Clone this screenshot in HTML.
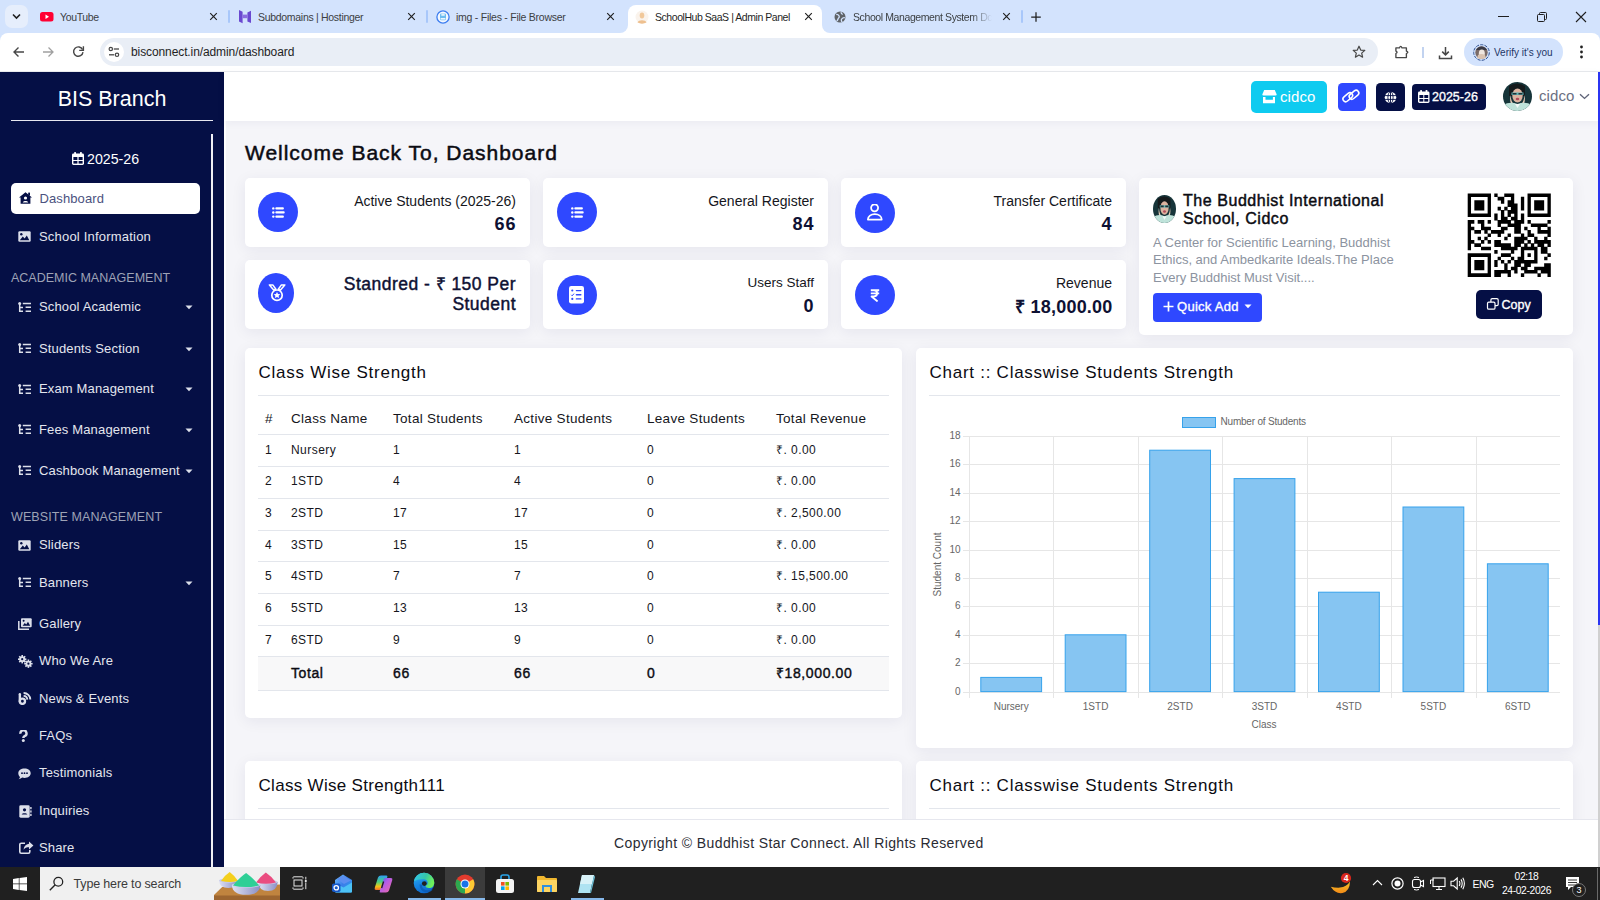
<!DOCTYPE html>
<html><head><meta charset="utf-8">
<style>
*{box-sizing:border-box;margin:0;padding:0}
html,body{width:1600px;height:900px;overflow:hidden;font-family:"Liberation Sans",sans-serif;background:#d3e3fd}
.abs{position:absolute}
#tabbar{position:absolute;left:0;top:0;width:1600px;height:33px;background:#d3e3fd}
.tabt{position:absolute;top:10px;font-size:12px;color:#3c4043;white-space:nowrap;line-height:14px}
.sep{position:absolute;top:10px;width:2px;height:13px;background:#a8c7fa;border-radius:1px}
#toolbar{position:absolute;left:0;top:33px;width:1600px;height:39px;background:#fff;border-radius:8px 8px 0 0;border-bottom:1px solid #e8eaed}
#omni{position:absolute;left:100px;top:5px;width:1278px;height:28px;background:#e9eef6;border-radius:14px}
#side{position:absolute;left:0;top:72px;width:224px;height:795px;background:#050f45;color:#e4e6ee}
#page{position:absolute;left:224px;top:72px;width:1376px;height:795px;background:#f5f5f9;overflow:hidden}
#hdr{position:absolute;left:0;top:0;width:1376px;height:49px;background:#fff}
.card{position:absolute;background:#fff;border-radius:5px;box-shadow:0 3px 15px rgba(30,30,90,0.07)}
#taskbar{position:absolute;left:0;top:867px;width:1600px;height:33px;background:#202020}
</style></head><body>
<div id="tabbar">
  <div class="abs" style="left:5px;top:5px;width:23px;height:23px;border-radius:7px;background:#e6eefc"></div>
  <svg class="abs" style="left:11px;top:12px" width="11" height="9" viewBox="0 0 11 9"><path d="M2 2.5 L5.5 6 L9 2.5" fill="none" stroke="#1f1f1f" stroke-width="1.6"/></svg>
  <!-- tab1 youtube -->
  <svg class="abs" style="left:40px;top:12px" width="14" height="10" viewBox="0 0 14 10"><rect x="0" y="0" width="13.5" height="9.5" rx="2.5" fill="#ff0033"/><path d="M5.5 2.6 L9 4.75 L5.5 6.9Z" fill="#fff"/></svg>
  <div class="tabt" style="left:60px;font-size:10.5px;letter-spacing:-0.35px">YouTube</div>
  <svg class="abs x" style="left:209px;top:12px" width="9" height="9" viewBox="0 0 9 9"><path d="M1.2 1.2L7.8 7.8M7.8 1.2L1.2 7.8" stroke="#1f1f1f" stroke-width="1.15"/></svg>
  <div class="sep" style="left:228px"></div>
  <!-- tab2 hostinger -->
  <svg class="abs" style="left:239px;top:10px" width="13" height="14" viewBox="0 0 13 14"><path d="M0 0L3.6 1.8V13.2L0 11.4Z" fill="#6a48d0"/><path d="M12 0.8V13L8.4 11.4V2.4Z" fill="#6a48d0"/><path d="M3.6 4.6L8.4 4.6V8.2H3.6Z" fill="#8a6be0"/></svg>
  <div class="tabt" style="left:258px;font-size:10.5px;letter-spacing:-0.3px">Subdomains | Hostinger</div>
  <svg class="abs x" style="left:407px;top:12px" width="9" height="9" viewBox="0 0 9 9"><path d="M1.2 1.2L7.8 7.8M7.8 1.2L1.2 7.8" stroke="#1f1f1f" stroke-width="1.15"/></svg>
  <div class="sep" style="left:426px"></div>
  <!-- tab3 img files -->
  <svg class="abs" style="left:436px;top:10px" width="14" height="14" viewBox="0 0 14 14"><circle cx="7" cy="7" r="6.1" fill="#f4f8ff" stroke="#3d7ef0" stroke-width="1.3"/><rect x="4" y="3.6" width="6" height="6.6" rx="1.2" fill="#6cbcf0"/><rect x="5.3" y="3.6" width="3.4" height="2.2" fill="#dff1fc"/><rect x="4.6" y="8" width="4.8" height="1.6" fill="#eaf6ff"/></svg>
  <div class="tabt" style="left:456px;font-size:10.5px;letter-spacing:-0.25px">img - Files - File Browser</div>
  <svg class="abs x" style="left:606px;top:12px" width="9" height="9" viewBox="0 0 9 9"><path d="M1.2 1.2L7.8 7.8M7.8 1.2L1.2 7.8" stroke="#1f1f1f" stroke-width="1.15"/></svg>
  <!-- active tab -->
  <div class="abs" style="left:628px;top:5px;width:194px;height:28px;background:#fff;border-radius:8px 8px 0 0"></div>
  <div class="abs" style="left:620px;top:25px;width:8px;height:8px;background:#fff"></div>
  <div class="abs" style="left:620px;top:25px;width:8px;height:8px;background:#d3e3fd;border-radius:0 0 8px 0"></div>
  <div class="abs" style="left:822px;top:25px;width:8px;height:8px;background:#fff"></div>
  <div class="abs" style="left:822px;top:25px;width:8px;height:8px;background:#d3e3fd;border-radius:0 0 0 8px"></div>
  <svg class="abs" style="left:635px;top:10px" width="14" height="14" viewBox="0 0 14 14"><circle cx="7" cy="7" r="6.5" fill="#faf3ec"/><ellipse cx="7" cy="5.6" rx="2.3" ry="3" fill="#f1c89a"/><path d="M2.5 12.6 C3.5 9.6 10.5 9.6 11.5 12.6 C9 14 5 14 2.5 12.6Z" fill="#eec08f"/></svg>
  <div class="tabt" style="left:655px;color:#1f1f1f;font-size:10.5px;letter-spacing:-0.45px">SchoolHub SaaS | Admin Panel</div>
  <svg class="abs x" style="left:804px;top:12px" width="9" height="9" viewBox="0 0 9 9"><path d="M1.2 1.2L7.8 7.8M7.8 1.2L1.2 7.8" stroke="#1f1f1f" stroke-width="1.15"/></svg>
  <!-- tab5 -->
  <svg class="abs" style="left:834px;top:11px" width="12" height="12" viewBox="0 0 12 12"><circle cx="6" cy="6" r="5.5" fill="#5f6368"/><path d="M2.2 3.5 C3.5 3.2 4.6 4.2 5.2 5.2 C5.8 6.3 4.4 6.8 4 8 C3.8 9 3.2 9.8 2.6 9.4 M7.2 1.2 C7 2.4 7.8 3.2 8.8 3.3 M10.8 6.8 C9.6 6.4 8.4 7.2 7.6 8.2 C7 9.2 7.4 10.4 8.4 10.8" fill="none" stroke="#d3e3fd" stroke-width="1.3"/></svg>
  <div class="tabt" style="left:853px;font-size:10.5px;letter-spacing:-0.4px;width:139px;overflow:hidden;-webkit-mask-image:linear-gradient(90deg,#000 85%,transparent)">School Management System Dc</div>
  <svg class="abs x" style="left:1002px;top:12px" width="9" height="9" viewBox="0 0 9 9"><path d="M1.2 1.2L7.8 7.8M7.8 1.2L1.2 7.8" stroke="#1f1f1f" stroke-width="1.15"/></svg>
  <div class="sep" style="left:1021px"></div>
  <svg class="abs" style="left:1030px;top:11px" width="12" height="12" viewBox="0 0 12 12"><path d="M6 1.2V10.8M1.2 6H10.8" stroke="#1f1f1f" stroke-width="1.25"/></svg>
  <!-- window controls -->
  <div class="abs" style="left:1498px;top:16px;width:11px;height:1px;background:#1f1f1f"></div>
  <svg class="abs" style="left:1536px;top:11px" width="12" height="12" viewBox="0 0 12 12"><rect x="1.5" y="3.5" width="7" height="7" rx="1" fill="none" stroke="#1f1f1f" stroke-width="1"/><path d="M3.5 3.5V2.5A1 1 0 0 1 4.5 1.5H9.5A1 1 0 0 1 10.5 2.5V7.5A1 1 0 0 1 9.5 8.5H8.5" fill="none" stroke="#1f1f1f" stroke-width="1"/></svg>
  <svg class="abs" style="left:1575px;top:11px" width="12" height="12" viewBox="0 0 12 12"><path d="M1 1L11 11M11 1L1 11" stroke="#1f1f1f" stroke-width="1.1"/></svg>
</div>
<div id="toolbar">
  <svg class="abs" style="left:12px;top:13px" width="13" height="12" viewBox="0 0 13 12"><path d="M12 6H2M6.5 1.5L2 6L6.5 10.5" fill="none" stroke="#474747" stroke-width="1.4"/></svg>
  <svg class="abs" style="left:42px;top:13px" width="13" height="12" viewBox="0 0 13 12"><path d="M1 6H11M6.5 1.5L11 6L6.5 10.5" fill="none" stroke="#a0a0a0" stroke-width="1.3"/></svg>
  <svg class="abs" style="left:72px;top:12px" width="13" height="13" viewBox="0 0 13 13"><path d="M10.6 4.6A4.7 4.7 0 1 0 11 7.2" fill="none" stroke="#474747" stroke-width="1.4"/><path d="M11.4 1.2V5.4H7.2" fill="none" stroke="#474747" stroke-width="1.4"/></svg>
  <div id="omni">
    <div class="abs" style="left:4px;top:4px;width:20px;height:20px;border-radius:10px;background:#fff"></div>
    <svg class="abs" style="left:8px;top:8px" width="12" height="12" viewBox="0 0 12 12"><circle cx="2.8" cy="3" r="1.7" fill="none" stroke="#474747" stroke-width="1.2"/><path d="M5.8 3H11" stroke="#474747" stroke-width="1.3"/><circle cx="9" cy="8.8" r="1.7" fill="none" stroke="#474747" stroke-width="1.2"/><path d="M1 8.8H6.2" stroke="#474747" stroke-width="1.3"/></svg>
    <div class="abs" style="left:31px;top:7px;font-size:12px;line-height:14px;color:#1f1f1f;letter-spacing:-0.1px">bisconnect.in/admin/dashboard</div>
  </div>
  <svg class="abs" style="left:1352px;top:12px" width="14" height="14" viewBox="0 0 14 14"><path d="M7 1.2L8.7 5.1L12.8 5.4L9.7 8.1L10.6 12.2L7 10L3.4 12.2L4.3 8.1L1.2 5.4L5.3 5.1Z" fill="none" stroke="#474747" stroke-width="1.2" stroke-linejoin="round"/></svg>
  <svg class="abs" style="left:1394px;top:12px" width="15" height="14" viewBox="0 0 15 14"><path d="M1.9 2.9H5.4Q6.7 -0.3 8 2.9H12.4V6.1Q15.2 7.3 12.4 8.5V12.6H1.9V8.5Q4.2 7.3 1.9 6.1Z" fill="none" stroke="#474747" stroke-width="1.35" stroke-linejoin="round"/></svg>
  <div class="abs" style="left:1422px;top:14px;width:1.5px;height:11px;background:#c2d3f0"></div>
  <svg class="abs" style="left:1438px;top:12.5px" width="15" height="14" viewBox="0 0 15 14"><path d="M7.5 1V8.6M4.2 5.6L7.5 8.9L10.8 5.6M1.5 9.5V12.5H13.5V9.5" fill="none" stroke="#474747" stroke-width="1.5"/></svg>
  <div class="abs" style="left:1464px;top:5px;width:99px;height:28px;border-radius:14px;background:#d3e3fd"></div>
  <svg class="abs" style="left:1472.5px;top:11px" width="17" height="17" viewBox="0 0 17 17"><circle cx="8.5" cy="8.5" r="7.8" fill="none" stroke="#2d4f8f" stroke-width="1" stroke-dasharray="3.2 1.2"/><circle cx="8.5" cy="8.5" r="6.2" fill="#7a6a66"/><path d="M3 6Q5 2.5 8.5 2.5Q12 2.5 14 6Z" fill="#3a3a44"/><ellipse cx="8.8" cy="9.5" rx="3" ry="4" fill="#efe6df"/><path d="M5 11Q8 9 12 11L13 14Q8.5 16 4 14Z" fill="#d9c2b0"/></svg>
  <div class="abs" style="left:1494px;top:13px;font-size:10px;line-height:14px;color:#1d3566">Verify it's you</div>
  <svg class="abs" style="left:1579px;top:12px" width="5" height="14" viewBox="0 0 5 14"><circle cx="2.5" cy="2" r="1.4" fill="#1f1f1f"/><circle cx="2.5" cy="7" r="1.4" fill="#1f1f1f"/><circle cx="2.5" cy="12" r="1.4" fill="#1f1f1f"/></svg>
</div>

<div id="side">
<div class="abs" style="left:0;top:14.5px;width:224px;text-align:center;font-size:21.5px;line-height:24px;color:#fff">BIS Branch</div>
<div class="abs" style="left:11px;top:48px;width:202px;height:1px;background:#e8e8f0"></div>
<div class="abs" style="left:211.4px;top:62px;width:1.7px;height:733px;background:#f0f0f6"></div>
<svg class="abs" style="left:72px;top:80px" width="12" height="13" viewBox="0 0 12 13"><rect x="0" y="1.6" width="12" height="11.4" rx="1.4" fill="#fff"/><rect x="2.2" y="0" width="1.8" height="3" rx="0.6" fill="#fff"/><rect x="8" y="0" width="1.8" height="3" rx="0.6" fill="#fff"/><rect x="1.4" y="5" width="4" height="3" fill="#050f45"/><rect x="6.6" y="5" width="4" height="3" fill="#050f45"/><rect x="1.4" y="9" width="4" height="2.6" fill="#050f45"/><rect x="6.6" y="9" width="4" height="2.6" fill="#050f45"/></svg>
<div class="abs" style="left:87px;top:78.5px;font-size:14.2px;line-height:17px;color:#fff;letter-spacing:0px">2025-26</div>
<div class="abs" style="left:11px;top:111px;width:189px;height:31px;background:#fff;border-radius:5px"></div>
<svg class="abs" style="left:19px;top:120px" width="13" height="12" viewBox="0 0 13 12"><path d="M6.5 0.2L13 5.6H11.4V11.8H1.6V5.6H0Z" fill="#050f45"/><rect x="9.2" y="0.6" width="1.8" height="3" fill="#050f45"/><circle cx="6.5" cy="6" r="1.6" fill="#fff"/><path d="M3.8 10.4C4 8.4 9 8.4 9.2 10.4Z" fill="#fff"/></svg>
<div class="abs" style="left:39.5px;top:119px;font-size:13px;line-height:15px;color:#4b5280;letter-spacing:0.1px">Dashboard</div>
<svg class="abs" style="left:18px;top:158.5px" width="13" height="11" viewBox="0 0 13 11"><rect x="0.3" y="0.3" width="12.4" height="10.4" rx="1.2" fill="#dcdfea"/><circle cx="3.3" cy="3.2" r="1.2" fill="#050f45"/><path d="M1.8 9.3L4.8 5.6L6.6 7.4L8.8 4.4L11.3 9.3Z" fill="#050f45"/></svg>
<div class="abs" style="left:39px;top:156.5px;font-size:13px;line-height:15px;color:#e4e6ee;letter-spacing:0.2px">School Information</div>
<div class="abs" style="left:11px;top:199px;font-size:12.5px;line-height:14px;color:#9ea3b6;letter-spacing:0px">ACADEMIC MANAGEMENT</div>
<div class="abs" style="left:11px;top:437.5px;font-size:12.5px;line-height:14px;color:#9ea3b6;letter-spacing:0.1px">WEBSITE MANAGEMENT</div>
<svg class="abs" style="left:18px;top:229.9px" width="14" height="11" viewBox="0 0 14 11"><circle cx="1.7" cy="1.6" r="1.5" fill="#dcdfea"/><path d="M1.7 2V9.3H5M1.7 5.4H5" fill="none" stroke="#dcdfea" stroke-width="1.5"/><path d="M4.8 1.5H13M7.6 5.3H13M7.6 9.2H13" stroke="#dcdfea" stroke-width="1.6"/></svg>
<div class="abs" style="left:39px;top:227.4px;font-size:13px;line-height:15px;color:#e4e6ee;letter-spacing:0.15px">School Academic</div>
<svg class="abs" style="left:185px;top:232.9px;margin-top:0.5px" width="8" height="5" viewBox="0 0 8 5"><path d="M0.5 0.6H7.5L4 4.2Z" fill="#dcdfea"/></svg>
<svg class="abs" style="left:18px;top:271.0px" width="14" height="11" viewBox="0 0 14 11"><circle cx="1.7" cy="1.6" r="1.5" fill="#dcdfea"/><path d="M1.7 2V9.3H5M1.7 5.4H5" fill="none" stroke="#dcdfea" stroke-width="1.5"/><path d="M4.8 1.5H13M7.6 5.3H13M7.6 9.2H13" stroke="#dcdfea" stroke-width="1.6"/></svg>
<div class="abs" style="left:39px;top:268.5px;font-size:13px;line-height:15px;color:#e4e6ee;letter-spacing:0.15px">Students Section</div>
<svg class="abs" style="left:185px;top:274.0px;margin-top:0.5px" width="8" height="5" viewBox="0 0 8 5"><path d="M0.5 0.6H7.5L4 4.2Z" fill="#dcdfea"/></svg>
<svg class="abs" style="left:18px;top:311.8px" width="14" height="11" viewBox="0 0 14 11"><circle cx="1.7" cy="1.6" r="1.5" fill="#dcdfea"/><path d="M1.7 2V9.3H5M1.7 5.4H5" fill="none" stroke="#dcdfea" stroke-width="1.5"/><path d="M4.8 1.5H13M7.6 5.3H13M7.6 9.2H13" stroke="#dcdfea" stroke-width="1.6"/></svg>
<div class="abs" style="left:39px;top:309.3px;font-size:13px;line-height:15px;color:#e4e6ee;letter-spacing:0.15px">Exam Management</div>
<svg class="abs" style="left:185px;top:314.8px;margin-top:0.5px" width="8" height="5" viewBox="0 0 8 5"><path d="M0.5 0.6H7.5L4 4.2Z" fill="#dcdfea"/></svg>
<svg class="abs" style="left:18px;top:352.4px" width="14" height="11" viewBox="0 0 14 11"><circle cx="1.7" cy="1.6" r="1.5" fill="#dcdfea"/><path d="M1.7 2V9.3H5M1.7 5.4H5" fill="none" stroke="#dcdfea" stroke-width="1.5"/><path d="M4.8 1.5H13M7.6 5.3H13M7.6 9.2H13" stroke="#dcdfea" stroke-width="1.6"/></svg>
<div class="abs" style="left:39px;top:349.9px;font-size:13px;line-height:15px;color:#e4e6ee;letter-spacing:0.15px">Fees Management</div>
<svg class="abs" style="left:185px;top:355.4px;margin-top:0.5px" width="8" height="5" viewBox="0 0 8 5"><path d="M0.5 0.6H7.5L4 4.2Z" fill="#dcdfea"/></svg>
<svg class="abs" style="left:18px;top:393.2px" width="14" height="11" viewBox="0 0 14 11"><circle cx="1.7" cy="1.6" r="1.5" fill="#dcdfea"/><path d="M1.7 2V9.3H5M1.7 5.4H5" fill="none" stroke="#dcdfea" stroke-width="1.5"/><path d="M4.8 1.5H13M7.6 5.3H13M7.6 9.2H13" stroke="#dcdfea" stroke-width="1.6"/></svg>
<div class="abs" style="left:39px;top:390.7px;font-size:13px;line-height:15px;color:#e4e6ee;letter-spacing:0.15px">Cashbook Management</div>
<svg class="abs" style="left:185px;top:396.2px;margin-top:0.5px" width="8" height="5" viewBox="0 0 8 5"><path d="M0.5 0.6H7.5L4 4.2Z" fill="#dcdfea"/></svg>
<svg class="abs" style="left:18px;top:467.7px" width="13" height="11" viewBox="0 0 13 11"><rect x="0.3" y="0.3" width="12.4" height="10.4" rx="1.2" fill="#dcdfea"/><circle cx="3.3" cy="3.2" r="1.2" fill="#050f45"/><path d="M1.8 9.3L4.8 5.6L6.6 7.4L8.8 4.4L11.3 9.3Z" fill="#050f45"/></svg>
<div class="abs" style="left:39px;top:465.2px;font-size:13px;line-height:15px;color:#e4e6ee;letter-spacing:0.15px">Sliders</div>
<svg class="abs" style="left:18px;top:505.1px" width="14" height="11" viewBox="0 0 14 11"><circle cx="1.7" cy="1.6" r="1.5" fill="#dcdfea"/><path d="M1.7 2V9.3H5M1.7 5.4H5" fill="none" stroke="#dcdfea" stroke-width="1.5"/><path d="M4.8 1.5H13M7.6 5.3H13M7.6 9.2H13" stroke="#dcdfea" stroke-width="1.6"/></svg>
<div class="abs" style="left:39px;top:502.6px;font-size:13px;line-height:15px;color:#e4e6ee;letter-spacing:0.15px">Banners</div>
<svg class="abs" style="left:185px;top:508.1px;margin-top:0.5px" width="8" height="5" viewBox="0 0 8 5"><path d="M0.5 0.6H7.5L4 4.2Z" fill="#dcdfea"/></svg>
<svg class="abs" style="left:18px;top:546.0px" width="14" height="12" viewBox="0 0 14 12"><path d="M0.8 3V11.2H11" fill="none" stroke="#dcdfea" stroke-width="1.5"/><rect x="3" y="0.3" width="10.7" height="8.9" rx="1" fill="#dcdfea"/><path d="M4.6 7.8L6.8 5L8.2 6.4L10 3.8L12.2 7.8Z" fill="#050f45"/><circle cx="5.6" cy="2.7" r="1" fill="#050f45"/></svg>
<div class="abs" style="left:39px;top:543.5px;font-size:13px;line-height:15px;color:#e4e6ee;letter-spacing:0.15px">Gallery</div>
<svg class="abs" style="left:18px;top:583.4px" width="15" height="13" viewBox="0 0 15 13"><g fill="#dcdfea"><circle cx="4.2" cy="4.2" r="2.9"/><rect x="3.4" y="0" width="1.6" height="8.4"/><rect x="0" y="3.4" width="8.4" height="1.6"/><rect x="3.4" y="0" width="1.6" height="8.4" transform="rotate(45 4.2 4.2)"/><rect x="3.4" y="0" width="1.6" height="8.4" transform="rotate(-45 4.2 4.2)"/><circle cx="10.4" cy="8.7" r="2.9"/><rect x="9.6" y="4.5" width="1.6" height="8.4"/><rect x="6.2" y="7.9" width="8.4" height="1.6"/><rect x="9.6" y="4.5" width="1.6" height="8.4" transform="rotate(45 10.4 8.7)"/><rect x="9.6" y="4.5" width="1.6" height="8.4" transform="rotate(-45 10.4 8.7)"/></g><circle cx="4.2" cy="4.2" r="1.1" fill="#050f45"/><circle cx="10.4" cy="8.7" r="1.1" fill="#050f45"/></svg>
<div class="abs" style="left:39px;top:580.9px;font-size:13px;line-height:15px;color:#e4e6ee;letter-spacing:0.15px">Who We Are</div>
<svg class="abs" style="left:18px;top:621.0px;margin-top:-1px" width="14" height="13" viewBox="0 0 14 13"><path d="M1.85 2.2V9.3" stroke="#dcdfea" stroke-width="2.4" stroke-linecap="round"/><circle cx="4.4" cy="9.3" r="2.6" fill="none" stroke="#dcdfea" stroke-width="2.3"/><path d="M5.6 3.9A3.9 3.9 0 0 1 9.3 7.6M5.6 1A6.6 6.6 0 0 1 12.3 7.6" fill="none" stroke="#dcdfea" stroke-width="1.9"/></svg>
<div class="abs" style="left:39px;top:618.5px;font-size:13px;line-height:15px;color:#e4e6ee;letter-spacing:0.15px">News &amp; Events</div>
<svg class="abs" style="left:18.5px;top:658.0px" width="9" height="12" viewBox="0 0 9 12"><path d="M1.5 3.8A3 3 0 1 1 5.4 6.2C4.5 6.8 4.3 7.1 4.3 8" fill="none" stroke="#dcdfea" stroke-width="2.4"/><circle cx="4.3" cy="10.4" r="1.5" fill="#dcdfea"/></svg>
<div class="abs" style="left:39px;top:655.5px;font-size:13px;line-height:15px;color:#e4e6ee;letter-spacing:0.15px">FAQs</div>
<svg class="abs" style="left:18px;top:695.8px" width="13" height="12" viewBox="0 0 13 12"><path d="M6.5 0.5C10 0.5 12.7 2.6 12.7 5.2S10 9.9 6.5 9.9C5.7 9.9 5 9.8 4.3 9.6C3.3 10.4 2 11 0.6 11.2C1.4 10.4 1.8 9.7 2 8.9C0.9 8 0.3 6.7 0.3 5.2C0.3 2.6 3 0.5 6.5 0.5Z" fill="#dcdfea"/><circle cx="4" cy="5.2" r="0.9" fill="#050f45"/><circle cx="6.5" cy="5.2" r="0.9" fill="#050f45"/><circle cx="9" cy="5.2" r="0.9" fill="#050f45"/></svg>
<div class="abs" style="left:39px;top:693.3px;font-size:13px;line-height:15px;color:#e4e6ee;letter-spacing:0.15px">Testimonials</div>
<svg class="abs" style="left:19px;top:733.2px" width="13" height="13" viewBox="0 0 13 13"><rect x="0.3" y="0.3" width="10.4" height="12.4" rx="1.4" fill="#dcdfea"/><rect x="11.2" y="2" width="1.4" height="2.2" fill="#dcdfea"/><rect x="11.2" y="5.4" width="1.4" height="2.2" fill="#dcdfea"/><rect x="11.2" y="8.8" width="1.4" height="2.2" fill="#dcdfea"/><circle cx="5.5" cy="4.8" r="1.6" fill="#050f45"/><path d="M2.7 9.6C3 7.8 8 7.8 8.3 9.6Z" fill="#050f45"/></svg>
<div class="abs" style="left:39px;top:730.7px;font-size:13px;line-height:15px;color:#e4e6ee;letter-spacing:0.15px">Inquiries</div>
<svg class="abs" style="left:18.5px;top:770.9px;margin-top:-1.5px" width="15" height="13" viewBox="0 0 15 13"><path d="M6 2.2H2.2A1.4 1.4 0 0 0 0.8 3.6V10.8A1.4 1.4 0 0 0 2.2 12.2H9.4A1.4 1.4 0 0 0 10.8 10.8V9" fill="none" stroke="#dcdfea" stroke-width="1.6"/><path d="M10 0.4L14.4 4.4L10 8.4V6.2C7.6 6.2 5.9 6.8 4.6 8.8C4.8 5.6 6.6 3.1 10 2.7Z" fill="#dcdfea"/></svg>
<div class="abs" style="left:39px;top:768.4px;font-size:13px;line-height:15px;color:#e4e6ee;letter-spacing:0.15px">Share</div>
</div>
<div id="page"></div>
<!--MAIN1-->
<div class="abs" style="left:224px;top:121px;width:2px;height:698px;background:#fff"></div>
<div class="abs" style="left:224px;top:72px;width:1376px;height:49px;background:#fff;box-shadow:0 2px 8px rgba(30,30,90,0.05)"></div>
<div class="abs" style="left:1251px;top:81px;width:76px;height:32px;background:#0fcbf0;border-radius:5px"></div>
<svg class="abs" style="left:1261px;top:89px" width="17" height="16" viewBox="0 0 17 16"><path d="M3.2 1.1H13.8L15.7 5.6Q15.7 6.6 14.6 6.6H2.4Q1.3 6.6 1.3 5.6Z" fill="#fff"/><path fill-rule="evenodd" d="M2 7.9H14V14.2H2ZM4.5 7.9H11.9V10.8H4.5Z" fill="#fff"/></svg>
<div class="abs" style="left:1280px;top:88px;font-size:15px;line-height:17px;color:#fff;letter-spacing:0.1px">cidco</div>
<div class="abs" style="left:1338px;top:83px;width:28px;height:28px;background:#2f48ff;border-radius:4.5px"></div>
<svg class="abs" style="left:1341px;top:86px" width="20" height="20" viewBox="0 0 20 20"><rect x="1.4" y="8.5" width="10.8" height="5.4" rx="2.7" fill="none" stroke="#fff" stroke-width="1.6" transform="rotate(-40 6.8 11.2)"/><rect x="7.6" y="6" width="10.8" height="5.4" rx="2.7" fill="none" stroke="#fff" stroke-width="1.6" transform="rotate(-40 13 8.7)"/></svg>
<div class="abs" style="left:1376px;top:83px;width:29px;height:28px;background:#050f45;border-radius:4.5px"></div>
<svg class="abs" style="left:1384px;top:91px" width="13" height="13" viewBox="0 0 13 13"><circle cx="6.5" cy="6.5" r="5.8" fill="#fff"/><path d="M0.8 4.6H12.2M0.8 8.4H12.2M6.5 0.7V12.3" stroke="#050f45" stroke-width="0.9"/><ellipse cx="6.5" cy="6.5" rx="2.6" ry="5.8" fill="none" stroke="#050f45" stroke-width="0.9"/></svg>
<div class="abs" style="left:1412px;top:84px;width:74px;height:26px;background:#050f45;border-radius:4px"></div>
<svg class="abs" style="left:1418px;top:90px" width="12" height="13" viewBox="0 0 12 13"><rect x="0" y="1.6" width="11.5" height="11.4" rx="1.4" fill="#fff"/><rect x="2.2" y="0" width="1.8" height="3" rx="0.6" fill="#fff"/><rect x="7.6" y="0" width="1.8" height="3" rx="0.6" fill="#fff"/><rect x="1.4" y="5" width="3.9" height="3" fill="#050f45"/><rect x="6.3" y="5" width="3.9" height="3" fill="#050f45"/><rect x="1.4" y="9" width="3.9" height="2.6" fill="#050f45"/><rect x="6.3" y="9" width="3.9" height="2.6" fill="#050f45"/></svg>
<div class="abs" style="left:1432px;top:90px;font-size:12.5px;line-height:14px;color:#fff;font-weight:400;-webkit-text-stroke:0.35px #fff;letter-spacing:0px">2025-26</div>
<svg class="abs" style="left:1503px;top:82px" width="29" height="29" viewBox="0 0 29 29" preserveAspectRatio="none"><defs><clipPath id="ac1"><ellipse cx="14.5" cy="14.5" rx="14.5" ry="14.5"/></clipPath></defs><g clip-path="url(#ac1)"><rect width="29" height="29" fill="#17353a"/><path d="M6 4Q14 -1 22 4L22 14H6Z" fill="#151a1c"/><ellipse cx="14.5" cy="13.5" rx="5.2" ry="7" fill="#dcb3a0"/><path d="M8.5 10.5H20.5V13H8.5Z" fill="#5fb3b3"/><path d="M9.5 11H13.5V12.6H9.5ZM15.5 11H19.5V12.6H15.5Z" fill="#1f2f35"/><ellipse cx="14.5" cy="17" rx="1.8" ry="1.3" fill="#b44b5a"/><path d="M7.5 13Q8 20 11 22L9.5 24Q6 20 7.5 13Z" fill="#e8cdb8"/><path d="M21.5 13Q21 20 18 22L19.5 24Q23 20 21.5 13Z" fill="#e8cdb8"/><path d="M0 29V23Q7 19 14.5 22Q22 19 29 23V29Z" fill="#bfe3da"/><path d="M12 22L14.5 26L17 22Z" fill="#ffffff" opacity="0.8"/></g></svg>
<div class="abs" style="left:1539px;top:87px;font-size:15px;line-height:17px;color:#6b6f82;letter-spacing:0.1px">cidco</div>
<svg class="abs" style="left:1578.5px;top:92.5px" width="11" height="7" viewBox="0 0 11 7"><path d="M1 1.2L5.5 5.4L10 1.2" fill="none" stroke="#5f6478" stroke-width="1.4"/></svg>
<div class="abs" style="left:1598px;top:72px;width:2px;height:795px;background:#d0d0d0"></div>
<div class="abs" style="left:1598px;top:72px;width:2px;height:553px;background:#2b35f2"></div>
<div class="abs" style="left:245px;top:141px;font-size:21px;line-height:24px;font-weight:400;-webkit-text-stroke:0.5px #0b0b12;color:#0b0b12;letter-spacing:0.98px">Wellcome Back To, Dashboard</div>
<div class="card" style="left:245px;top:178px;width:285px;height:69px;border-radius:5px"></div>
<div class="card" style="left:543px;top:178px;width:285px;height:69px;border-radius:5px"></div>
<div class="card" style="left:841px;top:178px;width:285px;height:69px;border-radius:5px"></div>
<div class="card" style="left:245px;top:260px;width:285px;height:69px;border-radius:5px"></div>
<div class="card" style="left:543px;top:260px;width:285px;height:69px;border-radius:5px"></div>
<div class="card" style="left:841px;top:260px;width:285px;height:69px;border-radius:5px"></div>
<div class="abs" style="left:258.0px;top:192.0px;width:40px;height:40px;border-radius:50%;background:#2f48ff"></div>
<svg class="abs" style="left:278px;top:212px;margin:-5.5px 0 0 -6.5px" width="13" height="11" viewBox="0 0 13 11"><g fill="#fff"><circle cx="1.3" cy="1.4" r="1.2"/><circle cx="1.3" cy="5.5" r="1.2"/><circle cx="1.3" cy="9.6" r="1.2"/><rect x="3.3" y="0.3" width="8.6" height="2.3" rx="1"/><rect x="3.3" y="4.3" width="9.4" height="2.3" rx="1"/><rect x="3.3" y="8.4" width="8.6" height="2.3" rx="1"/></g></svg>
<div class="abs" style="left:557.0px;top:192.0px;width:40px;height:40px;border-radius:50%;background:#2f48ff"></div>
<svg class="abs" style="left:577px;top:212px;margin:-5.5px 0 0 -6.5px" width="13" height="11" viewBox="0 0 13 11"><g fill="#fff"><circle cx="1.3" cy="1.4" r="1.2"/><circle cx="1.3" cy="5.5" r="1.2"/><circle cx="1.3" cy="9.6" r="1.2"/><rect x="3.3" y="0.3" width="8.6" height="2.3" rx="1"/><rect x="3.3" y="4.3" width="9.4" height="2.3" rx="1"/><rect x="3.3" y="8.4" width="8.6" height="2.3" rx="1"/></g></svg>
<div class="abs" style="left:855.0px;top:192.5px;width:40px;height:40px;border-radius:50%;background:#2f48ff"></div>
<svg class="abs" style="left:875px;top:212.5px;margin:-8.5px 0 0 -8px" width="16" height="17" viewBox="0 0 16 17"><circle cx="7.6" cy="3.8" r="3.5" fill="none" stroke="#fff" stroke-width="1.8"/><path d="M0.9 15.6C0.9 12.2 4 10.2 7.8 10.2C11.6 10.2 14.7 12.2 14.7 15.6Z" fill="none" stroke="#fff" stroke-width="1.8" stroke-linejoin="round"/></svg>
<div class="abs" style="left:257.8px;top:273.1px;width:36px;height:40px;border-radius:50%;background:#2f48ff"></div>
<svg class="abs" style="left:276.6px;top:293.1px;margin:-9px 0 0 -9px" width="18" height="18" viewBox="0 0 18 18"><path d="M1.4 0.9H4.8L7.9 5.2L5.9 6.2Z" fill="none" stroke="#fff" stroke-width="1.5" stroke-linejoin="round"/><path d="M16.8 0.9H13.4L10.3 5.2L12.3 6.2Z" fill="none" stroke="#fff" stroke-width="1.5" stroke-linejoin="round"/><circle cx="9" cy="11.2" r="5.2" fill="#2f48ff" stroke="#fff" stroke-width="1.7"/><path d="M9 7.9L10 10.1L12.3 10.3L10.6 11.8L11.1 14.1L9 12.9L6.9 14.1L7.4 11.8L5.7 10.3L8 10.1Z" fill="#fff"/></svg>
<div class="abs" style="left:556.9px;top:274.9px;width:40px;height:40px;border-radius:50%;background:#2f48ff"></div>
<svg class="abs" style="left:576.9px;top:294.9px;margin:-8.75px 0 0 -7.5px" width="15" height="17.5" viewBox="0 0 15 17.5"><rect x="0" y="0" width="15" height="17.5" rx="2.2" fill="#fff"/><g fill="#2f48ff"><circle cx="3.3" cy="4.5" r="1.1"/><circle cx="3.3" cy="12.9" r="1.1"/><rect x="6.7" y="3.9" width="5.8" height="1.3" rx="0.6"/><rect x="6.7" y="8.1" width="5.8" height="1.3" rx="0.6"/><rect x="6.7" y="12.3" width="5.8" height="1.3" rx="0.6"/></g><path d="M2.2 8.8L3.2 9.8L5 7.6" fill="none" stroke="#2f48ff" stroke-width="1"/></svg>
<div class="abs" style="left:855.0px;top:274.7px;width:40px;height:40px;border-radius:50%;background:#2f48ff"></div>
<svg class="abs" style="left:875px;top:294.7px;margin:-5.5px 0 0 -5px" width="10" height="13" viewBox="0 0 10 13"><path d="M0.8 1.2H9.2M0.8 4.4H9.2M2 1.2H4A2.8 2.8 0 0 1 4 7.4H1.6L7.6 12.4" fill="none" stroke="#fff" stroke-width="1.9" stroke-linejoin="round"/></svg>
<div class="abs" style="right:1084px;top:193px;font-size:14px;line-height:16px;font-weight:400;color:#15161c;letter-spacing:0px;white-space:nowrap;text-align:right">Active Students (2025-26)</div>
<div class="abs" style="right:1083.5px;top:214px;font-size:18px;line-height:20px;font-weight:700;color:#0e1133;letter-spacing:1px;white-space:nowrap;text-align:right">66</div>
<div class="abs" style="right:786px;top:193px;font-size:14px;line-height:16px;font-weight:400;color:#15161c;letter-spacing:0px;white-space:nowrap;text-align:right">General Register</div>
<div class="abs" style="right:785.5px;top:214px;font-size:18px;line-height:20px;font-weight:700;color:#0e1133;letter-spacing:1px;white-space:nowrap;text-align:right">84</div>
<div class="abs" style="right:488px;top:193px;font-size:14px;line-height:16px;font-weight:400;color:#15161c;letter-spacing:0px;white-space:nowrap;text-align:right">Transfer Certificate</div>
<div class="abs" style="right:487.5px;top:214px;font-size:18px;line-height:20px;font-weight:700;color:#0e1133;letter-spacing:1px;white-space:nowrap;text-align:right">4</div>
<div class="abs" style="right:786px;top:275px;font-size:13.5px;line-height:15.5px;font-weight:400;color:#15161c;letter-spacing:0px;white-space:nowrap;text-align:right">Users Staff</div>
<div class="abs" style="right:785.5px;top:296px;font-size:18px;line-height:20px;font-weight:700;color:#0e1133;letter-spacing:1px;white-space:nowrap;text-align:right">0</div>
<div class="abs" style="right:488px;top:275px;font-size:14px;line-height:16px;font-weight:400;color:#15161c;letter-spacing:0px;white-space:nowrap;text-align:right">Revenue</div>
<div class="abs" style="right:487.5px;top:297px;font-size:18px;line-height:20px;font-weight:700;color:#0e1133;letter-spacing:0.2px;white-space:nowrap;text-align:right">₹ 18,000.00</div>
<div class="abs" style="right:1084px;top:273.5px;font-size:17.5px;line-height:20px;font-weight:400;-webkit-text-stroke:0.45px #0e1133;color:#0e1133;letter-spacing:0.47px;text-align:right;white-space:nowrap">Standred - ₹ 150 Per<br>Student</div>
<div class="card" style="left:1139px;top:178px;width:434px;height:156.5px;border-radius:5px"></div>
<svg class="abs" style="left:1153px;top:194.5px" width="23" height="28" viewBox="0 0 29 29" preserveAspectRatio="none"><defs><clipPath id="ac2"><ellipse cx="14.5" cy="14.5" rx="14.5" ry="14.5"/></clipPath></defs><g clip-path="url(#ac2)"><rect width="29" height="29" fill="#17353a"/><path d="M6 4Q14 -1 22 4L22 14H6Z" fill="#151a1c"/><ellipse cx="14.5" cy="13.5" rx="5.2" ry="7" fill="#dcb3a0"/><path d="M8.5 10.5H20.5V13H8.5Z" fill="#5fb3b3"/><path d="M9.5 11H13.5V12.6H9.5ZM15.5 11H19.5V12.6H15.5Z" fill="#1f2f35"/><ellipse cx="14.5" cy="17" rx="1.8" ry="1.3" fill="#b44b5a"/><path d="M7.5 13Q8 20 11 22L9.5 24Q6 20 7.5 13Z" fill="#e8cdb8"/><path d="M21.5 13Q21 20 18 22L19.5 24Q23 20 21.5 13Z" fill="#e8cdb8"/><path d="M0 29V23Q7 19 14.5 22Q22 19 29 23V29Z" fill="#bfe3da"/><path d="M12 22L14.5 26L17 22Z" fill="#ffffff" opacity="0.8"/></g></svg>
<div class="abs" style="left:1183px;top:192px;font-size:16px;line-height:17.5px;font-weight:400;-webkit-text-stroke:0.45px #0b0b12;color:#0b0b12;letter-spacing:0.55px">The Buddhist International<br>School, Cidco</div>
<div class="abs" style="left:1153px;top:233.5px;font-size:13px;line-height:17.6px;color:#8c93a0;letter-spacing:0px">A Center for Scientific Learning, Buddhist<br>Ethics, and Ambedkarite Ideals.The Place<br>Every Buddhist Must Visit....</div>
<div class="abs" style="left:1153px;top:292.5px;width:109px;height:29px;background:#2f48ff;border-radius:4px"></div>
<svg class="abs" style="left:1163px;top:301px" width="11" height="11" viewBox="0 0 11 11"><path d="M5.5 0.5V10.5M0.5 5.5H10.5" stroke="#fff" stroke-width="1.7"/></svg>
<div class="abs" style="left:1177px;top:299px;font-size:13px;line-height:15px;font-weight:400;-webkit-text-stroke:0.35px #fff;color:#fff;letter-spacing:0.27px">Quick Add</div>
<svg class="abs" style="left:1244px;top:304px" width="8" height="5" viewBox="0 0 8 5"><path d="M0.5 0.5H7.5L4 4.3Z" fill="#fff"/></svg>
<div class="abs" style="left:1476px;top:290px;width:66px;height:29px;background:#050f45;border-radius:5px"></div>
<svg class="abs" style="left:1486px;top:297px" width="14" height="14" viewBox="0 0 14 14"><rect x="4.9" y="1.7" width="7.3" height="6.9" rx="1.3" fill="none" stroke="#fff" stroke-width="1.2"/><rect x="1.5" y="5.2" width="7.5" height="7" rx="1.3" fill="#050f45" stroke="#fff" stroke-width="1.2"/></svg>
<div class="abs" style="left:1501.5px;top:298px;font-size:12.5px;line-height:15px;font-weight:400;-webkit-text-stroke:0.35px #fff;color:#fff;letter-spacing:0.05px">Copy</div>
<!--QR--><svg class="abs" style="left:0;top:0" width="1600" height="900" viewBox="0 0 1600 900"><path fill="#000" d="M1467.70 193.50h23.27v3.62h-23.27zM1494.29 193.50h3.32v3.62h-3.32zM1504.26 193.50h9.97v3.62h-9.97zM1527.53 193.50h23.27v3.62h-23.27zM1467.70 196.82h3.32v3.62h-3.32zM1487.64 196.82h3.32v3.62h-3.32zM1497.62 196.82h6.65v3.62h-6.65zM1510.91 196.82h3.32v3.62h-3.32zM1520.88 196.82h3.32v3.62h-3.32zM1527.53 196.82h3.32v3.62h-3.32zM1547.48 196.82h3.32v3.62h-3.32zM1467.70 200.15h3.32v3.62h-3.32zM1474.35 200.15h9.97v3.62h-9.97zM1487.64 200.15h3.32v3.62h-3.32zM1500.94 200.15h3.32v3.62h-3.32zM1507.59 200.15h6.65v3.62h-6.65zM1520.88 200.15h3.32v3.62h-3.32zM1527.53 200.15h3.32v3.62h-3.32zM1534.18 200.15h9.97v3.62h-9.97zM1547.48 200.15h3.32v3.62h-3.32zM1467.70 203.47h3.32v3.62h-3.32zM1474.35 203.47h9.97v3.62h-9.97zM1487.64 203.47h3.32v3.62h-3.32zM1507.59 203.47h9.97v3.62h-9.97zM1520.88 203.47h3.32v3.62h-3.32zM1527.53 203.47h3.32v3.62h-3.32zM1534.18 203.47h9.97v3.62h-9.97zM1547.48 203.47h3.32v3.62h-3.32zM1467.70 206.80h3.32v3.62h-3.32zM1474.35 206.80h9.97v3.62h-9.97zM1487.64 206.80h3.32v3.62h-3.32zM1497.62 206.80h3.32v3.62h-3.32zM1504.26 206.80h3.32v3.62h-3.32zM1510.91 206.80h6.65v3.62h-6.65zM1520.88 206.80h3.32v3.62h-3.32zM1527.53 206.80h3.32v3.62h-3.32zM1534.18 206.80h9.97v3.62h-9.97zM1547.48 206.80h3.32v3.62h-3.32zM1467.70 210.12h3.32v3.62h-3.32zM1487.64 210.12h3.32v3.62h-3.32zM1500.94 210.12h3.32v3.62h-3.32zM1507.59 210.12h9.97v3.62h-9.97zM1527.53 210.12h3.32v3.62h-3.32zM1547.48 210.12h3.32v3.62h-3.32zM1467.70 213.44h23.27v3.62h-23.27zM1494.29 213.44h3.32v3.62h-3.32zM1500.94 213.44h3.32v3.62h-3.32zM1507.59 213.44h3.32v3.62h-3.32zM1514.24 213.44h3.32v3.62h-3.32zM1520.88 213.44h3.32v3.62h-3.32zM1527.53 213.44h23.27v3.62h-23.27zM1494.29 216.77h3.32v3.62h-3.32zM1500.94 216.77h6.65v3.62h-6.65zM1510.91 216.77h6.65v3.62h-6.65zM1520.88 216.77h3.32v3.62h-3.32zM1467.70 220.09h6.65v3.62h-6.65zM1477.67 220.09h6.65v3.62h-6.65zM1487.64 220.09h3.32v3.62h-3.32zM1497.62 220.09h13.30v3.62h-13.30zM1514.24 220.09h9.97v3.62h-9.97zM1527.53 220.09h3.32v3.62h-3.32zM1547.48 220.09h3.32v3.62h-3.32zM1467.70 223.42h3.32v3.62h-3.32zM1481.00 223.42h3.32v3.62h-3.32zM1497.62 223.42h3.32v3.62h-3.32zM1507.59 223.42h13.30v3.62h-13.30zM1530.86 223.42h16.62v3.62h-16.62zM1467.70 226.74h6.65v3.62h-6.65zM1481.00 226.74h9.97v3.62h-9.97zM1500.94 226.74h6.65v3.62h-6.65zM1514.24 226.74h6.65v3.62h-6.65zM1524.21 226.74h3.32v3.62h-3.32zM1537.50 226.74h3.32v3.62h-3.32zM1547.48 226.74h3.32v3.62h-3.32zM1467.70 230.06h3.32v3.62h-3.32zM1474.35 230.06h6.65v3.62h-6.65zM1484.32 230.06h3.32v3.62h-3.32zM1490.97 230.06h13.30v3.62h-13.30zM1514.24 230.06h6.65v3.62h-6.65zM1527.53 230.06h3.32v3.62h-3.32zM1537.50 230.06h13.30v3.62h-13.30zM1467.70 233.39h3.32v3.62h-3.32zM1487.64 233.39h3.32v3.62h-3.32zM1497.62 233.39h3.32v3.62h-3.32zM1507.59 233.39h3.32v3.62h-3.32zM1520.88 233.39h3.32v3.62h-3.32zM1527.53 233.39h6.65v3.62h-6.65zM1547.48 233.39h3.32v3.62h-3.32zM1467.70 236.71h3.32v3.62h-3.32zM1477.67 236.71h3.32v3.62h-3.32zM1484.32 236.71h3.32v3.62h-3.32zM1504.26 236.71h3.32v3.62h-3.32zM1514.24 236.71h13.30v3.62h-13.30zM1534.18 236.71h3.32v3.62h-3.32zM1544.15 236.71h3.32v3.62h-3.32zM1467.70 240.04h6.65v3.62h-6.65zM1481.00 240.04h3.32v3.62h-3.32zM1487.64 240.04h3.32v3.62h-3.32zM1494.29 240.04h6.65v3.62h-6.65zM1514.24 240.04h9.97v3.62h-9.97zM1527.53 240.04h3.32v3.62h-3.32zM1534.18 240.04h16.62v3.62h-16.62zM1467.70 243.36h3.32v3.62h-3.32zM1474.35 243.36h6.65v3.62h-6.65zM1494.29 243.36h16.62v3.62h-16.62zM1514.24 243.36h6.65v3.62h-6.65zM1524.21 243.36h3.32v3.62h-3.32zM1530.86 243.36h3.32v3.62h-3.32zM1537.50 243.36h6.65v3.62h-6.65zM1547.48 243.36h3.32v3.62h-3.32zM1467.70 246.68h3.32v3.62h-3.32zM1481.00 246.68h9.97v3.62h-9.97zM1500.94 246.68h16.62v3.62h-16.62zM1520.88 246.68h16.62v3.62h-16.62zM1540.83 246.68h6.65v3.62h-6.65zM1494.29 250.01h3.32v3.62h-3.32zM1510.91 250.01h3.32v3.62h-3.32zM1520.88 250.01h3.32v3.62h-3.32zM1534.18 250.01h3.32v3.62h-3.32zM1540.83 250.01h6.65v3.62h-6.65zM1467.70 253.33h23.27v3.62h-23.27zM1500.94 253.33h9.97v3.62h-9.97zM1520.88 253.33h3.32v3.62h-3.32zM1527.53 253.33h3.32v3.62h-3.32zM1534.18 253.33h3.32v3.62h-3.32zM1547.48 253.33h3.32v3.62h-3.32zM1467.70 256.66h3.32v3.62h-3.32zM1487.64 256.66h3.32v3.62h-3.32zM1497.62 256.66h3.32v3.62h-3.32zM1510.91 256.66h3.32v3.62h-3.32zM1517.56 256.66h6.65v3.62h-6.65zM1534.18 256.66h3.32v3.62h-3.32zM1544.15 256.66h3.32v3.62h-3.32zM1467.70 259.98h3.32v3.62h-3.32zM1474.35 259.98h9.97v3.62h-9.97zM1487.64 259.98h3.32v3.62h-3.32zM1494.29 259.98h3.32v3.62h-3.32zM1500.94 259.98h3.32v3.62h-3.32zM1507.59 259.98h3.32v3.62h-3.32zM1514.24 259.98h23.27v3.62h-23.27zM1467.70 263.30h3.32v3.62h-3.32zM1474.35 263.30h9.97v3.62h-9.97zM1487.64 263.30h3.32v3.62h-3.32zM1494.29 263.30h3.32v3.62h-3.32zM1504.26 263.30h3.32v3.62h-3.32zM1514.24 263.30h6.65v3.62h-6.65zM1524.21 263.30h6.65v3.62h-6.65zM1544.15 263.30h6.65v3.62h-6.65zM1467.70 266.63h3.32v3.62h-3.32zM1474.35 266.63h9.97v3.62h-9.97zM1487.64 266.63h3.32v3.62h-3.32zM1504.26 266.63h3.32v3.62h-3.32zM1510.91 266.63h6.65v3.62h-6.65zM1520.88 266.63h6.65v3.62h-6.65zM1534.18 266.63h16.62v3.62h-16.62zM1467.70 269.95h3.32v3.62h-3.32zM1487.64 269.95h3.32v3.62h-3.32zM1494.29 269.95h16.62v3.62h-16.62zM1514.24 269.95h3.32v3.62h-3.32zM1524.21 269.95h13.30v3.62h-13.30zM1540.83 269.95h9.97v3.62h-9.97zM1467.70 273.28h23.27v3.62h-23.27zM1494.29 273.28h6.65v3.62h-6.65zM1507.59 273.28h3.32v3.62h-3.32zM1520.88 273.28h3.32v3.62h-3.32zM1537.50 273.28h3.32v3.62h-3.32zM1547.48 273.28h3.32v3.62h-3.32z"/></svg><!--/QR-->
<!--/MAIN1-->
<!--MAIN2-->
<div class="card" style="left:245px;top:348px;width:657px;height:370px;border-radius:5px"></div>
<div class="abs" style="left:258.5px;top:364px;font-size:17px;line-height:18px;color:#0b0b12;letter-spacing:0.75px">Class Wise Strength</div>
<div class="abs" style="left:258px;top:395px;width:631px;height:1px;background:#e3e6ec"></div>
<div class="abs" style="left:265px;top:411px;font-size:13.5px;line-height:15px;color:#15161c;letter-spacing:0.3px;white-space:nowrap">#</div>
<div class="abs" style="left:291px;top:411px;font-size:13.5px;line-height:15px;color:#15161c;letter-spacing:0.3px;white-space:nowrap">Class Name</div>
<div class="abs" style="left:393px;top:411px;font-size:13.5px;line-height:15px;color:#15161c;letter-spacing:0.3px;white-space:nowrap">Total Students</div>
<div class="abs" style="left:514px;top:411px;font-size:13.5px;line-height:15px;color:#15161c;letter-spacing:0.3px;white-space:nowrap">Active Students</div>
<div class="abs" style="left:647px;top:411px;font-size:13.5px;line-height:15px;color:#15161c;letter-spacing:0.3px;white-space:nowrap">Leave Students</div>
<div class="abs" style="left:776px;top:411px;font-size:13.5px;line-height:15px;color:#15161c;letter-spacing:0.3px;white-space:nowrap">Total Revenue</div>
<div class="abs" style="left:258px;top:434px;width:631px;height:1px;background:#e3e6ec"></div>
<div class="abs" style="left:258px;top:466px;width:631px;height:1px;background:#e3e6ec"></div>
<div class="abs" style="left:258px;top:497.5px;width:631px;height:1px;background:#e3e6ec"></div>
<div class="abs" style="left:258px;top:529.5px;width:631px;height:1px;background:#e3e6ec"></div>
<div class="abs" style="left:258px;top:561px;width:631px;height:1px;background:#e3e6ec"></div>
<div class="abs" style="left:258px;top:592.5px;width:631px;height:1px;background:#e3e6ec"></div>
<div class="abs" style="left:258px;top:624.5px;width:631px;height:1px;background:#e3e6ec"></div>
<div class="abs" style="left:258px;top:656px;width:631px;height:1px;background:#e3e6ec"></div>
<div class="abs" style="left:258px;top:690px;width:631px;height:1px;background:#e3e6ec"></div>
<div class="abs" style="left:265px;top:442.5px;font-size:12px;line-height:14px;color:#15161c;letter-spacing:0.45px;white-space:nowrap">1</div>
<div class="abs" style="left:291px;top:442.5px;font-size:12px;line-height:14px;color:#15161c;letter-spacing:0.45px;white-space:nowrap">Nursery</div>
<div class="abs" style="left:393px;top:442.5px;font-size:12px;line-height:14px;color:#15161c;letter-spacing:0.45px;white-space:nowrap">1</div>
<div class="abs" style="left:514px;top:442.5px;font-size:12px;line-height:14px;color:#15161c;letter-spacing:0.45px;white-space:nowrap">1</div>
<div class="abs" style="left:647px;top:442.5px;font-size:12px;line-height:14px;color:#15161c;letter-spacing:0.45px;white-space:nowrap">0</div>
<div class="abs" style="left:776px;top:442.5px;font-size:12px;line-height:14px;color:#15161c;letter-spacing:0.45px;white-space:nowrap">₹. 0.00</div>
<div class="abs" style="left:265px;top:474.2px;font-size:12px;line-height:14px;color:#15161c;letter-spacing:0.45px;white-space:nowrap">2</div>
<div class="abs" style="left:291px;top:474.2px;font-size:12px;line-height:14px;color:#15161c;letter-spacing:0.45px;white-space:nowrap">1STD</div>
<div class="abs" style="left:393px;top:474.2px;font-size:12px;line-height:14px;color:#15161c;letter-spacing:0.45px;white-space:nowrap">4</div>
<div class="abs" style="left:514px;top:474.2px;font-size:12px;line-height:14px;color:#15161c;letter-spacing:0.45px;white-space:nowrap">4</div>
<div class="abs" style="left:647px;top:474.2px;font-size:12px;line-height:14px;color:#15161c;letter-spacing:0.45px;white-space:nowrap">0</div>
<div class="abs" style="left:776px;top:474.2px;font-size:12px;line-height:14px;color:#15161c;letter-spacing:0.45px;white-space:nowrap">₹. 0.00</div>
<div class="abs" style="left:265px;top:506.0px;font-size:12px;line-height:14px;color:#15161c;letter-spacing:0.45px;white-space:nowrap">3</div>
<div class="abs" style="left:291px;top:506.0px;font-size:12px;line-height:14px;color:#15161c;letter-spacing:0.45px;white-space:nowrap">2STD</div>
<div class="abs" style="left:393px;top:506.0px;font-size:12px;line-height:14px;color:#15161c;letter-spacing:0.45px;white-space:nowrap">17</div>
<div class="abs" style="left:514px;top:506.0px;font-size:12px;line-height:14px;color:#15161c;letter-spacing:0.45px;white-space:nowrap">17</div>
<div class="abs" style="left:647px;top:506.0px;font-size:12px;line-height:14px;color:#15161c;letter-spacing:0.45px;white-space:nowrap">0</div>
<div class="abs" style="left:776px;top:506.0px;font-size:12px;line-height:14px;color:#15161c;letter-spacing:0.45px;white-space:nowrap">₹. 2,500.00</div>
<div class="abs" style="left:265px;top:537.8px;font-size:12px;line-height:14px;color:#15161c;letter-spacing:0.45px;white-space:nowrap">4</div>
<div class="abs" style="left:291px;top:537.8px;font-size:12px;line-height:14px;color:#15161c;letter-spacing:0.45px;white-space:nowrap">3STD</div>
<div class="abs" style="left:393px;top:537.8px;font-size:12px;line-height:14px;color:#15161c;letter-spacing:0.45px;white-space:nowrap">15</div>
<div class="abs" style="left:514px;top:537.8px;font-size:12px;line-height:14px;color:#15161c;letter-spacing:0.45px;white-space:nowrap">15</div>
<div class="abs" style="left:647px;top:537.8px;font-size:12px;line-height:14px;color:#15161c;letter-spacing:0.45px;white-space:nowrap">0</div>
<div class="abs" style="left:776px;top:537.8px;font-size:12px;line-height:14px;color:#15161c;letter-spacing:0.45px;white-space:nowrap">₹. 0.00</div>
<div class="abs" style="left:265px;top:569.2px;font-size:12px;line-height:14px;color:#15161c;letter-spacing:0.45px;white-space:nowrap">5</div>
<div class="abs" style="left:291px;top:569.2px;font-size:12px;line-height:14px;color:#15161c;letter-spacing:0.45px;white-space:nowrap">4STD</div>
<div class="abs" style="left:393px;top:569.2px;font-size:12px;line-height:14px;color:#15161c;letter-spacing:0.45px;white-space:nowrap">7</div>
<div class="abs" style="left:514px;top:569.2px;font-size:12px;line-height:14px;color:#15161c;letter-spacing:0.45px;white-space:nowrap">7</div>
<div class="abs" style="left:647px;top:569.2px;font-size:12px;line-height:14px;color:#15161c;letter-spacing:0.45px;white-space:nowrap">0</div>
<div class="abs" style="left:776px;top:569.2px;font-size:12px;line-height:14px;color:#15161c;letter-spacing:0.45px;white-space:nowrap">₹. 15,500.00</div>
<div class="abs" style="left:265px;top:601.0px;font-size:12px;line-height:14px;color:#15161c;letter-spacing:0.45px;white-space:nowrap">6</div>
<div class="abs" style="left:291px;top:601.0px;font-size:12px;line-height:14px;color:#15161c;letter-spacing:0.45px;white-space:nowrap">5STD</div>
<div class="abs" style="left:393px;top:601.0px;font-size:12px;line-height:14px;color:#15161c;letter-spacing:0.45px;white-space:nowrap">13</div>
<div class="abs" style="left:514px;top:601.0px;font-size:12px;line-height:14px;color:#15161c;letter-spacing:0.45px;white-space:nowrap">13</div>
<div class="abs" style="left:647px;top:601.0px;font-size:12px;line-height:14px;color:#15161c;letter-spacing:0.45px;white-space:nowrap">0</div>
<div class="abs" style="left:776px;top:601.0px;font-size:12px;line-height:14px;color:#15161c;letter-spacing:0.45px;white-space:nowrap">₹. 0.00</div>
<div class="abs" style="left:265px;top:632.8px;font-size:12px;line-height:14px;color:#15161c;letter-spacing:0.45px;white-space:nowrap">7</div>
<div class="abs" style="left:291px;top:632.8px;font-size:12px;line-height:14px;color:#15161c;letter-spacing:0.45px;white-space:nowrap">6STD</div>
<div class="abs" style="left:393px;top:632.8px;font-size:12px;line-height:14px;color:#15161c;letter-spacing:0.45px;white-space:nowrap">9</div>
<div class="abs" style="left:514px;top:632.8px;font-size:12px;line-height:14px;color:#15161c;letter-spacing:0.45px;white-space:nowrap">9</div>
<div class="abs" style="left:647px;top:632.8px;font-size:12px;line-height:14px;color:#15161c;letter-spacing:0.45px;white-space:nowrap">0</div>
<div class="abs" style="left:776px;top:632.8px;font-size:12px;line-height:14px;color:#15161c;letter-spacing:0.45px;white-space:nowrap">₹. 0.00</div>
<div class="abs" style="left:258px;top:657px;width:631px;height:33px;background:#f8f8f9"></div>
<div class="abs" style="left:291px;top:665px;font-size:14px;line-height:16px;font-weight:400;-webkit-text-stroke:0.4px #0b0b12;color:#0b0b12;letter-spacing:0.6px;white-space:nowrap">Total</div>
<div class="abs" style="left:393px;top:665px;font-size:14px;line-height:16px;font-weight:400;-webkit-text-stroke:0.4px #0b0b12;color:#0b0b12;letter-spacing:0.6px;white-space:nowrap">66</div>
<div class="abs" style="left:514px;top:665px;font-size:14px;line-height:16px;font-weight:400;-webkit-text-stroke:0.4px #0b0b12;color:#0b0b12;letter-spacing:0.6px;white-space:nowrap">66</div>
<div class="abs" style="left:647px;top:665px;font-size:14px;line-height:16px;font-weight:400;-webkit-text-stroke:0.4px #0b0b12;color:#0b0b12;letter-spacing:0.6px;white-space:nowrap">0</div>
<div class="abs" style="left:776px;top:665px;font-size:14px;line-height:16px;font-weight:400;-webkit-text-stroke:0.4px #0b0b12;color:#0b0b12;letter-spacing:0.6px;white-space:nowrap">₹18,000.00</div>
<div class="card" style="left:916px;top:348px;width:657px;height:399.5px;border-radius:5px"></div>
<div class="abs" style="left:929.5px;top:364px;font-size:17px;line-height:18px;color:#0b0b12;letter-spacing:0.74px">Chart :: Classwise Students Strength</div>
<div class="abs" style="left:929px;top:395px;width:631px;height:1px;background:#e3e6ec"></div>
<svg class="abs" style="left:0;top:0" width="1600" height="900" viewBox="0 0 1600 900">
<rect x="1182.5" y="417.5" width="33" height="10" fill="#86c5f2" stroke="#36a2eb" stroke-width="1"/>
<text x="1220.5" y="425" font-size="10" fill="#666" letter-spacing="-0.2" font-family="Liberation Sans">Number of Students</text>
<line x1="963" y1="692.5" x2="1560" y2="692.5" stroke="#e6e6e6" stroke-width="1"/>
<text x="960.5" y="694.5" font-size="10" fill="#666" text-anchor="end" font-family="Liberation Sans">0</text>
<line x1="963" y1="663.5" x2="1560" y2="663.5" stroke="#e6e6e6" stroke-width="1"/>
<text x="960.5" y="665.5" font-size="10" fill="#666" text-anchor="end" font-family="Liberation Sans">2</text>
<line x1="963" y1="635.5" x2="1560" y2="635.5" stroke="#e6e6e6" stroke-width="1"/>
<text x="960.5" y="637.5" font-size="10" fill="#666" text-anchor="end" font-family="Liberation Sans">4</text>
<line x1="963" y1="606.5" x2="1560" y2="606.5" stroke="#e6e6e6" stroke-width="1"/>
<text x="960.5" y="608.5" font-size="10" fill="#666" text-anchor="end" font-family="Liberation Sans">6</text>
<line x1="963" y1="578.5" x2="1560" y2="578.5" stroke="#e6e6e6" stroke-width="1"/>
<text x="960.5" y="580.5" font-size="10" fill="#666" text-anchor="end" font-family="Liberation Sans">8</text>
<line x1="963" y1="550.5" x2="1560" y2="550.5" stroke="#e6e6e6" stroke-width="1"/>
<text x="960.5" y="552.5" font-size="10" fill="#666" text-anchor="end" font-family="Liberation Sans">10</text>
<line x1="963" y1="521.5" x2="1560" y2="521.5" stroke="#e6e6e6" stroke-width="1"/>
<text x="960.5" y="523.5" font-size="10" fill="#666" text-anchor="end" font-family="Liberation Sans">12</text>
<line x1="963" y1="493.5" x2="1560" y2="493.5" stroke="#e6e6e6" stroke-width="1"/>
<text x="960.5" y="495.5" font-size="10" fill="#666" text-anchor="end" font-family="Liberation Sans">14</text>
<line x1="963" y1="464.5" x2="1560" y2="464.5" stroke="#e6e6e6" stroke-width="1"/>
<text x="960.5" y="466.5" font-size="10" fill="#666" text-anchor="end" font-family="Liberation Sans">16</text>
<line x1="963" y1="436.5" x2="1560" y2="436.5" stroke="#e6e6e6" stroke-width="1"/>
<text x="960.5" y="438.5" font-size="10" fill="#666" text-anchor="end" font-family="Liberation Sans">18</text>
<line x1="969.5" y1="436" x2="969.5" y2="698" stroke="#e6e6e6" stroke-width="1"/>
<line x1="1053.5" y1="436" x2="1053.5" y2="698" stroke="#e6e6e6" stroke-width="1"/>
<line x1="1138.5" y1="436" x2="1138.5" y2="698" stroke="#e6e6e6" stroke-width="1"/>
<line x1="1222.5" y1="436" x2="1222.5" y2="698" stroke="#e6e6e6" stroke-width="1"/>
<line x1="1307.5" y1="436" x2="1307.5" y2="698" stroke="#e6e6e6" stroke-width="1"/>
<line x1="1391.5" y1="436" x2="1391.5" y2="698" stroke="#e6e6e6" stroke-width="1"/>
<line x1="1476.5" y1="436" x2="1476.5" y2="698" stroke="#e6e6e6" stroke-width="1"/>
<rect x="980.8" y="677.4" width="60.8" height="14.2" fill="#86c5f2" stroke="#36a2eb" stroke-width="1"/>
<text x="1011.2" y="709.5" font-size="10" fill="#666" text-anchor="middle" font-family="Liberation Sans">Nursery</text>
<rect x="1065.2" y="634.8" width="60.8" height="56.8" fill="#86c5f2" stroke="#36a2eb" stroke-width="1"/>
<text x="1095.6" y="709.5" font-size="10" fill="#666" text-anchor="middle" font-family="Liberation Sans">1STD</text>
<rect x="1149.7" y="450.2" width="60.8" height="241.4" fill="#86c5f2" stroke="#36a2eb" stroke-width="1"/>
<text x="1180.1" y="709.5" font-size="10" fill="#666" text-anchor="middle" font-family="Liberation Sans">2STD</text>
<rect x="1234.1" y="478.6" width="60.8" height="213.0" fill="#86c5f2" stroke="#36a2eb" stroke-width="1"/>
<text x="1264.5" y="709.5" font-size="10" fill="#666" text-anchor="middle" font-family="Liberation Sans">3STD</text>
<rect x="1318.5" y="592.2" width="60.8" height="99.4" fill="#86c5f2" stroke="#36a2eb" stroke-width="1"/>
<text x="1348.9" y="709.5" font-size="10" fill="#666" text-anchor="middle" font-family="Liberation Sans">4STD</text>
<rect x="1403.0" y="507.0" width="60.8" height="184.6" fill="#86c5f2" stroke="#36a2eb" stroke-width="1"/>
<text x="1433.4" y="709.5" font-size="10" fill="#666" text-anchor="middle" font-family="Liberation Sans">5STD</text>
<rect x="1487.4" y="563.8" width="60.8" height="127.8" fill="#86c5f2" stroke="#36a2eb" stroke-width="1"/>
<text x="1517.8" y="709.5" font-size="10" fill="#666" text-anchor="middle" font-family="Liberation Sans">6STD</text>
<text x="1264" y="727.5" font-size="10" fill="#666" text-anchor="middle" font-family="Liberation Sans">Class</text>
<text x="0" y="0" font-size="10" fill="#666" text-anchor="middle" font-family="Liberation Sans" transform="translate(941 564.5) rotate(-90)">Student Count</text>
</svg>
<div class="card" style="left:245px;top:761px;width:657px;height:139px;border-radius:5px"></div>
<div class="card" style="left:916px;top:761px;width:657px;height:139px;border-radius:5px"></div>
<div class="abs" style="left:258.5px;top:777px;font-size:17px;line-height:18px;color:#0b0b12;letter-spacing:0.3px">Class Wise Strength111</div>
<div class="abs" style="left:258px;top:807.5px;width:631px;height:1px;background:#e3e6ec"></div>
<div class="abs" style="left:929.5px;top:777px;font-size:17px;line-height:18px;color:#0b0b12;letter-spacing:0.74px">Chart :: Classwise Students Strength</div>
<div class="abs" style="left:929px;top:807.5px;width:631px;height:1px;background:#e3e6ec"></div>
<div class="abs" style="left:224px;top:819px;width:1374px;height:48px;background:#fff;border-top:1px solid #e6e7ee"></div>
<div class="abs" style="left:614px;top:834.5px;font-size:14px;line-height:16px;color:#2a2b33;letter-spacing:0.4px;white-space:nowrap">Copyright © Buddhist Star Connect. All Rights Reserved</div>
<!--/MAIN2-->
<div id="taskbar">
  <svg class="abs" style="left:13px;top:9.5px" width="14" height="14" viewBox="0 0 14 14"><path d="M0 1.9L5.8 1.1V6.6H0ZM6.5 1L14 0V6.6H6.5ZM0 7.3H5.8V12.9L0 12.1ZM6.5 7.3H14V14L6.5 13Z" fill="#fff"/></svg>
  <div class="abs" style="left:40px;top:0;width:240px;height:33px;background:#f0f0f0"></div>
  <svg class="abs" style="left:49px;top:9px" width="15" height="15" viewBox="0 0 15 15"><circle cx="9.3" cy="5.7" r="4.4" fill="none" stroke="#222" stroke-width="1.3"/><path d="M6.2 8.8L0.8 14.2" stroke="#222" stroke-width="1.4"/></svg>
  <div class="abs" style="left:73.5px;top:9.5px;font-size:12.5px;line-height:14px;color:#3b3b3b;letter-spacing:-0.15px">Type here to search</div>
  <!-- holi bowls -->
  <svg class="abs" style="left:210px;top:0" width="70" height="33" viewBox="0 0 70 33">
    <defs><linearGradient id="bw" x1="0" x2="1"><stop offset="0" stop-color="#dfe1f4"/><stop offset="1" stop-color="#8a8ec4"/></linearGradient></defs>
    <path d="M4 28L12.2 20L70 17.5V33H4Z" fill="#c0843f"/>
    <path d="M4 28.5H70V33H4Z" fill="#9c6530"/>
    <path d="M9 13.5Q9.5 21 18.4 21Q27.3 21 27.8 13.5Z" fill="url(#bw)"/>
    <ellipse cx="18.4" cy="13.5" rx="9.4" ry="2.2" fill="#c9cbe8"/>
    <path d="M11 14Q15 8 19.7 5Q24 8 28 14Q20 16 11 14Z" fill="#f4cf1c"/>
    <path d="M48.3 15Q48.8 24 58 24Q67.2 24 67.7 15Z" fill="url(#bw)"/>
    <ellipse cx="58" cy="15" rx="9.7" ry="2.2" fill="#c9cbe8"/>
    <path d="M46 15.5Q51 9 55.8 5.6Q61 9 66 15.5Q56 18 46 15.5Z" fill="#ea4c80"/>
    <path d="M21.8 18Q22.4 27.8 36.1 27.8Q49.8 27.8 50.4 18Z" fill="url(#bw)"/>
    <ellipse cx="36.1" cy="18" rx="14.3" ry="2.6" fill="#cfd1ec"/>
    <path d="M23 18.5Q30 10 36.1 6Q42 10 49.2 18.5Q36 21.5 23 18.5Z" fill="#2ecf96"/>
  </svg>
  <!-- task view -->
  <svg class="abs" style="left:292px;top:9px" width="16" height="14" viewBox="0 0 16 14"><path d="M1 2.6V1.5Q1 0.8 1.7 0.8H10.3Q11 0.8 11 1.5V2.6M1 11.4V12.5Q1 13.2 1.7 13.2H10.3Q11 13.2 11 12.5V11.4" fill="none" stroke="#e6e6e6" stroke-width="1"/><rect x="2" y="4" width="8" height="6" fill="none" stroke="#e6e6e6" stroke-width="1"/><path d="M13.8 0.8V3.6M13.8 6.4V13.2" stroke="#e6e6e6" stroke-width="1"/><circle cx="13.8" cy="5" r="1.1" fill="#fff"/></svg>
  <!-- outlook -->
  <svg class="abs" style="left:332px;top:7px" width="21" height="19" viewBox="0 0 21 19"><defs><linearGradient id="olg" x1="0" y1="0" x2="1" y2="1"><stop offset="0" stop-color="#6fc3ff"/><stop offset="0.5" stop-color="#3a7de8"/><stop offset="1" stop-color="#2aa7f0"/></linearGradient></defs><path d="M3 6L11 0.5L20 6V17.5Q20 18.5 19 18.5H4Q3 18.5 3 17.5Z" fill="url(#olg)"/><path d="M5 5L11 1.5L19 6.5L12 10Z" fill="#5b8ef0"/><path d="M3 9L11.5 13.5L20 8.5V17.5Q20 18.5 19 18.5H4Q3 18.5 3 17.5Z" fill="#4cc2f5"/><rect x="0" y="9.5" width="8.5" height="8.5" rx="1.8" fill="#1658c8"/><circle cx="4.25" cy="13.75" r="2.2" fill="none" stroke="#fff" stroke-width="1.3"/></svg>
  <!-- copilot -->
  <svg class="abs" style="left:374px;top:8px" width="19" height="18" viewBox="0 0 19 18"><defs><linearGradient id="cpl" x1="0" y1="0" x2="0" y2="1"><stop offset="0" stop-color="#2b9cf5"/><stop offset="0.45" stop-color="#4fd27a"/><stop offset="0.75" stop-color="#f5c518"/><stop offset="1" stop-color="#f56a2a"/></linearGradient><linearGradient id="cpr" x1="0" y1="0" x2="1" y2="1"><stop offset="0" stop-color="#3b5cf0"/><stop offset="0.4" stop-color="#b45de8"/><stop offset="1" stop-color="#f56aa0"/></linearGradient></defs><path d="M7 0.5H12.5Q13.8 0.5 13.3 2L9.6 13.5Q9.1 15 7.5 15H2Q0.2 15 0.7 13L4 2.5Q4.6 0.5 7 0.5Z" fill="url(#cpl)"/><path d="M11.5 3H17Q18.8 3 18.3 5L15 15.5Q14.4 17.5 12 17.5H6.5Q5.3 17.5 5.8 16L9.5 4.5Q10 3 11.5 3Z" fill="url(#cpr)"/><path d="M9.6 6.5L7.6 13" stroke="#202020" stroke-width="1.4"/></svg>
  <!-- edge -->
  <svg class="abs" style="left:413px;top:5.3px" width="22" height="22" viewBox="0 0 22 22"><defs><linearGradient id="eb" x1="0" y1="0" x2="0.4" y2="1"><stop offset="0" stop-color="#35c4f6"/><stop offset="0.5" stop-color="#1a8ce6"/><stop offset="1" stop-color="#0d6ad0"/></linearGradient><linearGradient id="eg" x1="0" y1="0" x2="1" y2="0.3"><stop offset="0" stop-color="#32c8f0"/><stop offset="0.6" stop-color="#35c6a8"/><stop offset="1" stop-color="#6ef05a"/></linearGradient></defs><circle cx="11" cy="11" r="10.3" fill="url(#eb)"/><path d="M0.9 9.2A10.3 10.3 0 0 1 21.3 10.2Q21.4 15.2 17 16Q13 16.6 12.2 13.8Q14.8 13.2 14.8 10.8Q14.5 7.6 10.4 7.2Q4.5 6.8 0.9 9.2Z" fill="url(#eg)"/><path d="M6.6 12.5Q6.4 19 13 20.6Q17.5 20.8 20 17.2Q16 19 12.5 18Q8.8 16.8 8.9 12.6Z" fill="#0c58b0" opacity="0.7"/><circle cx="11.3" cy="11.6" r="2.4" fill="#202020"/></svg>
  <!-- chrome -->
  <div class="abs" style="left:445px;top:0;width:40px;height:33px;background:#3b3b3b"></div>
  <svg class="abs" style="left:455px;top:7px" width="20" height="20" viewBox="0 0 20 20"><circle cx="10" cy="10" r="9.5" fill="#e33b2e"/><path d="M10 10L1.8 5.3A9.5 9.5 0 0 0 10 19.5Z" fill="#2da94f"/><path d="M10 10L18.2 5.3A9.5 9.5 0 0 1 10 19.5Z" fill="#fcc934"/><path d="M10 10L10 19.5L14.7 11.5ZM10 10L1.8 5.3L5.3 11.5Z" fill="none"/><circle cx="10" cy="10" r="4.5" fill="#fff"/><circle cx="10" cy="10" r="3.5" fill="#1a73e8"/></svg>
  <!-- store -->
  <svg class="abs" style="left:495px;top:7px" width="20" height="20" viewBox="0 0 20 20"><path d="M6 5V3A2 2 0 0 1 8 1H12A2 2 0 0 1 14 3V5" fill="none" stroke="#2aa4e8" stroke-width="1.6"/><rect x="1" y="5" width="18" height="14" rx="2.5" fill="#f3f3f3"/><rect x="6" y="8" width="3.6" height="3.6" fill="#f25022"/><rect x="10.4" y="8" width="3.6" height="3.6" fill="#7fba00"/><rect x="6" y="12.4" width="3.6" height="3.6" fill="#00a4ef"/><rect x="10.4" y="12.4" width="3.6" height="3.6" fill="#ffb900"/></svg>
  <!-- explorer -->
  <svg class="abs" style="left:537px;top:8px" width="20" height="17" viewBox="0 0 20 17"><path d="M0 2A1 1 0 0 1 1 1H7L9 3H19A1 1 0 0 1 20 4V16A1 1 0 0 1 19 17H1A1 1 0 0 1 0 16Z" fill="#f0b72f"/><rect x="0" y="5" width="20" height="12" rx="1" fill="#fcd462"/><path d="M6 17V11H14V17" fill="none" stroke="#2f8fe0" stroke-width="2"/></svg>
  <!-- notepad-ish -->
  <svg class="abs" style="left:577px;top:7px" width="19" height="20" viewBox="0 0 19 20"><path d="M5 1H17L13 19H1Z" fill="#aee3f2"/><path d="M5 1H17L15 10H3Z" fill="#d8f2f8"/><path d="M13 19L17 1L18 3L14 19Z" fill="#6cc0d8"/></svg>
  <div class="abs" style="left:407.5px;top:31px;width:33.5px;height:2px;background:#86b8ea"></div>
  <div class="abs" style="left:445px;top:31px;width:40px;height:2px;background:#86b8ea"></div>
  <div class="abs" style="left:571px;top:31px;width:33px;height:2px;background:#86b8ea"></div>
  <!-- tray -->
  <svg class="abs" style="left:1328px;top:2px" width="26" height="28" viewBox="0 0 26 28"><defs><linearGradient id="og" x1="0" y1="0" x2="0" y2="1"><stop offset="0" stop-color="#f7c52a"/><stop offset="1" stop-color="#f28a17"/></linearGradient></defs><path d="M2.8 17.8Q7.5 25.2 14.5 24Q21.8 22.3 22 12.5Q18.5 18.2 12 18.6Q6.8 18.8 2.8 17.8Z" fill="url(#og)"/><circle cx="18" cy="9" r="5.1" fill="#d9261c"/><text x="18" y="12.2" font-size="8.5" font-weight="700" fill="#fff" text-anchor="middle" font-family="Liberation Sans">4</text></svg>
  <svg class="abs" style="left:1372px;top:12px" width="11" height="7" viewBox="0 0 11 7"><path d="M1 6L5.5 1.5L10 6" fill="none" stroke="#fff" stroke-width="1.1"/></svg>
  <svg class="abs" style="left:1391px;top:10px" width="13" height="13" viewBox="0 0 13 13"><circle cx="6.5" cy="6.5" r="5.6" fill="none" stroke="#fff" stroke-width="1.2"/><circle cx="6.5" cy="6.5" r="3" fill="#fff"/></svg>
  <svg class="abs" style="left:1411px;top:9px" width="14" height="15" viewBox="0 0 14 15"><rect x="1.5" y="3.5" width="8" height="8" rx="2" fill="none" stroke="#fff" stroke-width="1.1"/><path d="M9.5 6L12.5 4.5V10.5L9.5 9" fill="none" stroke="#fff" stroke-width="1.1"/><path d="M3 1.5Q5.5 0.5 8 1.5M3 13.5Q5.5 14.5 8 13.5" fill="none" stroke="#fff" stroke-width="1"/></svg>
  <svg class="abs" style="left:1430px;top:9px" width="16" height="15" viewBox="0 0 16 15"><rect x="3" y="2" width="12" height="8.5" fill="none" stroke="#fff" stroke-width="1.1"/><path d="M9 10.5V13M6 13.5H12" stroke="#fff" stroke-width="1.1"/><path d="M0.5 4H4M0.5 4V8" stroke="#fff" stroke-width="1"/></svg>
  <svg class="abs" style="left:1450px;top:9px" width="15" height="15" viewBox="0 0 15 15"><path d="M1 5.2H3.6L7.2 2V13L3.6 9.8H1Z" fill="none" stroke="#fff" stroke-width="1.1"/><path d="M9.2 5Q10.6 7.5 9.2 10M11 3.4Q13.4 7.5 11 11.6M12.8 1.8Q16 7.5 12.8 13.2" fill="none" stroke="#fff" stroke-width="1.1"/></svg>
  <div class="abs" style="left:1472.5px;top:11px;font-size:10.5px;line-height:12px;color:#fff;letter-spacing:-0.6px">ENG</div>
  <div class="abs" style="left:1500px;top:3.5px;width:53px;text-align:center;font-size:10.3px;line-height:12px;color:#fff;letter-spacing:-0.4px">02:18</div>
  <div class="abs" style="left:1500px;top:18px;width:53px;text-align:center;font-size:10.3px;line-height:12px;color:#fff;letter-spacing:-0.35px">24-02-2026</div>
  <svg class="abs" style="left:1565px;top:9px" width="22" height="22" viewBox="0 0 22 22"><path d="M1 1H14V11H6L3 14V11H1Z" fill="#fff"/><path d="M3 4H12M3 6.5H12M3 9H10" stroke="#202020" stroke-width="0.9"/><circle cx="14" cy="14" r="6.5" fill="#202020" stroke="#7a7a7a" stroke-width="1"/><text x="14" y="17.2" font-size="9" fill="#fff" text-anchor="middle" font-family="Liberation Sans">3</text></svg>
  <div class="abs" style="left:1597px;top:1px;width:1px;height:32px;background:#6a6a6a"></div>
</div>

</body></html>
